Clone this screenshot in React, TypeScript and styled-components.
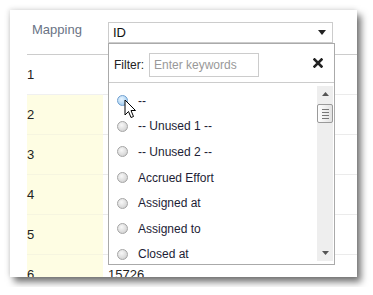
import React from 'react';
import styled, { createGlobalStyle } from 'styled-components';

const GlobalStyle = createGlobalStyle`
  body {
    margin: 0;
    background: #fff;
    font-family: 'Liberation Sans', Arial, sans-serif;
  }
`;

const rows = [
  { num: '1', value: '', marked: false },
  { num: '2', value: '', marked: true },
  { num: '3', value: '', marked: true },
  { num: '4', value: '', marked: true },
  { num: '5', value: '', marked: true },
  { num: '6', value: '15726', marked: true },
];

const options = ['--', '-- Unused 1 --', '-- Unused 2 --', 'Accrued Effort', 'Assigned at', 'Assigned to', 'Closed at'];

function App() {
  return (
    <Page>
      <GlobalStyle />
      <Card>
        <HeaderRow>
          <HeaderLabel>Mapping</HeaderLabel>
          <SelectCell>
            <SelectBox>
              <span>ID</span>
              <svg width="8" height="5" viewBox="0 0 8 5">
                <path d="M0 0 L8 0 L4 5 Z" fill="#222" />
              </svg>
            </SelectBox>
          </SelectCell>
        </HeaderRow>

        {rows.map((row) => (
          <Row key={row.num}>
            <NumCell marked={row.marked}>{row.num}</NumCell>
            <ValueCell>{row.value}</ValueCell>
          </Row>
        ))}

        <DropPanel>
          <FilterBar>
            <FilterLabel>Filter:</FilterLabel>
            <FilterInput placeholder="Enter keywords" />
            <CloseIcon width="10" height="10" viewBox="0 0 10 10">
              <path d="M1.5 1.5 L8.5 8.5 M8.5 1.5 L1.5 8.5" stroke="#222" strokeWidth="2.6" strokeLinecap="square" />
            </CloseIcon>
          </FilterBar>
          <ListArea>
            <OptionList>
              {options.map((opt, i) => (
                <OptionItem key={opt}>
                  <Radio hovered={i === 0} />
                  <span>{opt}</span>
                </OptionItem>
              ))}
            </OptionList>
            <ScrollBar>
              <ScrollArrow>
                <svg width="7" height="4" viewBox="0 0 7 4">
                  <path d="M0 4 L7 4 L3.5 0 Z" fill="#555" />
                </svg>
              </ScrollArrow>
              <Thumb>
                <Grip />
                <Grip />
                <Grip />
                <Grip />
              </Thumb>
              <TrackSpace />
              <ScrollArrow>
                <svg width="7" height="4" viewBox="0 0 7 4">
                  <path d="M0 0 L7 0 L3.5 4 Z" fill="#555" />
                </svg>
              </ScrollArrow>
            </ScrollBar>
          </ListArea>
        </DropPanel>

        <Cursor width="13" height="20" viewBox="0 0 13 20">
          <path
            d="M1 1 L1 16 L4.5 12.5 L7 18.5 L9.5 17.5 L7 11.5 L11.5 11.5 Z"
            fill="#fff"
            stroke="#000"
            strokeWidth="1"
            strokeLinejoin="round"
          />
        </Cursor>
      </Card>
    </Page>
  );
}

const Page = styled.div`
  padding: 10px;
`;

const Card = styled.div`
  position: relative;
  width: 347px;
  height: 267px;
  box-sizing: border-box;
  padding-left: 17px;
  background: #fff;
  overflow: hidden;
  box-shadow: 4px 5px 7px rgba(0, 0, 0, 0.55), -1px -1px 5px rgba(0, 0, 0, 0.12);
`;

const HeaderRow = styled.div`
  display: grid;
  grid-template-columns: 76px 1fr;
  height: 45px;
  box-sizing: border-box;
  border-bottom: 1px solid #ccc;
`;

const HeaderLabel = styled.div`
  padding: 12px 5px 0;
  font-size: 13px;
  line-height: 16px;
  color: #6a7385;
`;

const SelectCell = styled.div`
  padding: 12px 0 0 5px;
`;

const SelectBox = styled.div`
  display: flex;
  align-items: center;
  justify-content: space-between;
  width: 225px;
  height: 21px;
  box-sizing: border-box;
  border: 1px solid #ccc;
  padding: 0 6px 0 4px;
  font-size: 13px;
  color: #111;
`;

const Row = styled.div`
  display: grid;
  grid-template-columns: 76px 1fr;
  height: 40px;
`;

const NumCell = styled.div<{ marked: boolean }>`
  display: flex;
  align-items: center;
  background: ${(p) => (p.marked ? '#fefde3' : '#fff')};
  border-bottom: 1px solid ${(p) => (p.marked ? '#f6f5e0' : '#f0f0f0')};
  font-size: 13px;
  color: #222;
`;

const ValueCell = styled.div`
  display: flex;
  align-items: center;
  padding-left: 5px;
  border-bottom: 1px solid #ebebeb;
  font-size: 13px;
  color: #222;
`;

const DropPanel = styled.div`
  position: absolute;
  top: 33px;
  left: 98px;
  width: 227px;
  height: 222px;
  box-sizing: border-box;
  border: 1px solid #aaa;
  background: #fff;
  display: flex;
  flex-direction: column;
`;

const FilterBar = styled.div`
  display: flex;
  align-items: center;
  height: 39px;
  box-sizing: border-box;
  padding: 3px 5px 0;
  border-bottom: 1px solid #ccc;
`;

const FilterLabel = styled.span`
  font-size: 12px;
  color: #222;
`;

const FilterInput = styled.input`
  width: 110px;
  height: 24px;
  box-sizing: border-box;
  margin-left: 5px;
  padding: 0 4px;
  border: 1px solid #ccc;
  font-family: 'Liberation Sans', Arial, sans-serif;
  font-size: 12px;
  color: #333;
  outline: none;

  &::placeholder {
    color: #999;
  }
`;

const CloseIcon = styled.svg`
  margin-left: auto;
  margin-right: 6px;
  margin-top: -3px;
`;

const ListArea = styled.div`
  flex: 1;
  display: flex;
  min-height: 0;
`;

const OptionList = styled.div`
  flex: 1;
  padding: 5px 0 0 8px;
`;

const OptionItem = styled.div`
  display: flex;
  align-items: center;
  gap: 10px;
  height: 25.6px;
  font-size: 12px;
  color: #1d1d35;
`;

const Radio = styled.span<{ hovered: boolean }>`
  width: 11px;
  height: 11px;
  box-sizing: border-box;
  border-radius: 50%;
  border: 1px solid ${(p) => (p.hovered ? '#6f9fd0' : '#a5a5a5')};
  background: ${(p) =>
    p.hovered
      ? 'radial-gradient(circle at 40% 35%, #eaf5ff 0%, #b4d8f5 60%, #8dbde6 100%)'
      : 'radial-gradient(circle at 40% 35%, #f8f8f8 0%, #dcdcdc 60%, #c4c4c4 100%)'};
`;

const ScrollBar = styled.div`
  display: flex;
  flex-direction: column;
  width: 16px;
  margin: 3px 1px 3px 0;
  background: #eee;
`;

const ScrollArrow = styled.div`
  display: flex;
  align-items: center;
  justify-content: center;
  height: 16px;
`;

const Thumb = styled.div`
  display: flex;
  flex-direction: column;
  align-items: center;
  justify-content: center;
  gap: 2px;
  height: 19px;
  margin: 2px 0 0;
  box-sizing: border-box;
  border: 1px solid #9a9a9a;
  border-radius: 2px;
  background: linear-gradient(to right, #fdfdfd, #e2e2e2);
`;

const Grip = styled.span`
  width: 7px;
  height: 1px;
  background: #777;
`;

const TrackSpace = styled.div`
  flex: 1;
`;

const Cursor = styled.svg`
  position: absolute;
  left: 114px;
  top: 89px;
`;

export default App;
